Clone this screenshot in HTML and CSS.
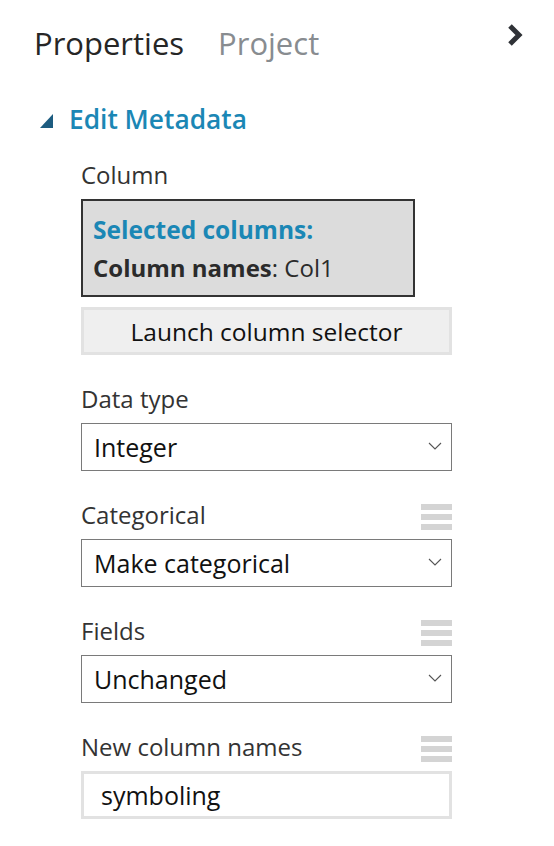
FILE: index.html
```html
<!DOCTYPE html>
<html>
<head>
<meta charset="utf-8">
<link rel="stylesheet" href="styles.css">
</head>
<body>
<div class="panel">
  <div class="tabs">
    <span class="tab active">Properties</span>
    <span class="tab">Project</span>
    <svg class="collapse" width="17" height="24" viewBox="0 0 17 24"><polyline points="3,3 12,12 3,21" fill="none" stroke="#2f3237" stroke-width="5" stroke-linejoin="miter"/></svg>
  </div>
  <div class="section-title">
    <svg class="tri" width="14" height="15" viewBox="0 0 14 15"><polygon points="13,0 13,14 0,14" fill="#1d5c80"/></svg>
    <span>Edit Metadata</span>
  </div>
  <div class="form">
    <div class="field">
      <div class="label-row"><span class="label">Column</span></div>
      <div class="selected-box">
        <div class="sel-title">Selected columns:</div>
        <div class="sel-line"><b>Column names</b>: Col1</div>
      </div>
      <div class="launch">Launch column selector</div>
    </div>
    <div class="field">
      <div class="label-row"><span class="label">Data type</span></div>
      <div class="select"><span>Integer</span><svg class="caret" width="14" height="8" viewBox="0 0 14 8"><polyline points="1,1 7,7 13,1" fill="none" stroke="#555" stroke-width="1.1"/></svg></div>
    </div>
    <div class="field">
      <div class="label-row"><span class="label">Categorical</span><span class="handle"><i></i><i></i><i></i></span></div>
      <div class="select"><span>Make categorical</span><svg class="caret" width="14" height="8" viewBox="0 0 14 8"><polyline points="1,1 7,7 13,1" fill="none" stroke="#555" stroke-width="1.1"/></svg></div>
    </div>
    <div class="field">
      <div class="label-row"><span class="label">Fields</span><span class="handle"><i></i><i></i><i></i></span></div>
      <div class="select"><span>Unchanged</span><svg class="caret" width="14" height="8" viewBox="0 0 14 8"><polyline points="1,1 7,7 13,1" fill="none" stroke="#555" stroke-width="1.1"/></svg></div>
    </div>
    <div class="field">
      <div class="label-row"><span class="label">New column names</span><span class="handle"><i></i><i></i><i></i></span></div>
      <div class="textbox">symboling</div>
    </div>
  </div>
</div>
</body>
</html>
```

FILE: styles.css
```css
html, body {
  margin: 0;
  padding: 0;
  background: #ffffff;
}
body {
  font-family: "Open Sans", "Noto Sans", "Liberation Sans", sans-serif;
  color: #333333;
}
.panel {
  width: 554px;
  padding: 23px 0 0 34px;
  box-sizing: border-box;
}
.tabs {
  display: flex;
  align-items: flex-start;
  height: 40px;
  padding-right: 30px;
}
.tab {
  font-size: 31px;
  line-height: 40px;
  color: #888c90;
  margin-right: 34px;
}
.tab.active {
  color: #262626;
}
.collapse {
  margin-left: auto;
  margin-top: 0px;
}
.section-title {
  display: flex;
  align-items: center;
  margin-top: 39px;
  margin-left: 6px;
  height: 34px;
}
.section-title .tri {
  margin-right: 15px;
  margin-top: 5px;
}
.section-title span {
  font-size: 26.3px;
  line-height: 34px;
  font-weight: 600;
  color: #1b87b5;
}
.form {
  margin-left: 47px;
  width: 371px;
  margin-top: 22px;
}
.field {
  margin-bottom: 27px;
}
.label-row {
  display: flex;
  justify-content: space-between;
  align-items: flex-start;
  height: 34px;
  margin-bottom: 7px;
}
.label {
  font-size: 24px;
  line-height: 34px;
  color: #333333;
}
.handle {
  display: flex;
  flex-direction: column;
  gap: 4px;
  width: 31px;
  margin-top: 6px;
}
.handle i {
  display: block;
  height: 6px;
  background: #d4d4d4;
}
.selected-box {
  width: 334px;
  height: 98px;
  box-sizing: border-box;
  border: 2px solid #333333;
  background: #dcdcdc;
  padding: 10px 0 0 10px;
}
.sel-title {
  font-size: 24.5px;
  font-weight: 700;
  color: #1b87b5;
  line-height: 38px;
}
.sel-line {
  font-size: 24px;
  color: #2b2b2b;
  line-height: 38px;
}
.sel-line b {
  font-weight: 700;
}
.launch {
  margin-top: 10px;
  height: 48px;
  box-sizing: border-box;
  border: 3px solid #e2e2e2;
  background: #efefef;
  display: flex;
  align-items: center;
  justify-content: center;
  font-size: 24.5px;
  color: #111111;
}
.select {
  height: 48px;
  box-sizing: border-box;
  border: 1px solid #7a7a7a;
  display: flex;
  align-items: center;
  justify-content: space-between;
  padding: 0 9px 0 12px;
  font-size: 25px;
  color: #111111;
}
.caret {
  margin-top: -2px;
}
.textbox {
  height: 48px;
  box-sizing: border-box;
  border: 3px solid #e2e2e2;
  display: flex;
  align-items: center;
  padding-left: 17px;
  font-size: 25px;
  color: #111111;
}
```
